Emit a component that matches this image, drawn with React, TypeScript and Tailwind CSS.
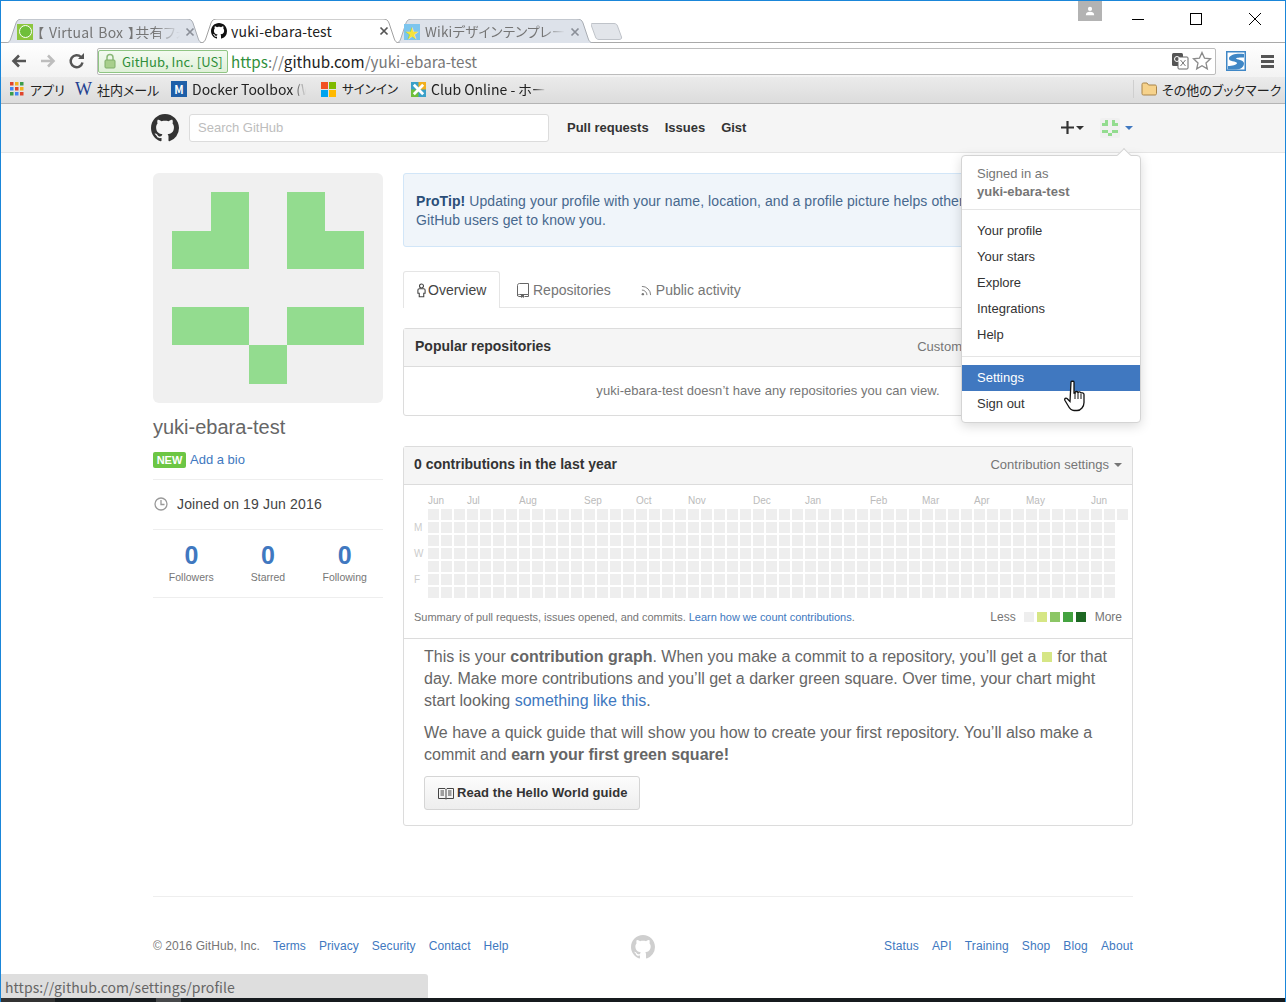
import React from 'react';

const markPath =
  'M8 0C3.58 0 0 3.58 0 8c0 3.54 2.29 6.53 5.47 7.59.4.07.55-.17.55-.38 0-.19-.01-.82-.01-1.49-2.01.37-2.53-.49-2.69-.94-.09-.23-.48-.94-.82-1.13-.28-.15-.68-.52-.01-.53.63-.01 1.08.58 1.23.82.72 1.21 1.87.87 2.33.66.07-.52.28-.87.51-1.07-1.78-.2-3.64-.89-3.64-3.95 0-.87.31-1.59.82-2.15-.08-.2-.36-1.02.08-2.12 0 0 .67-.21 2.2.82.64-.18 1.32-.27 2-.27.68 0 1.36.09 2 .27 1.53-1.04 2.2-.82 2.2-.82.44 1.1.16 1.92.08 2.12.51.56.82 1.27.82 2.15 0 3.07-1.87 3.75-3.65 3.95.29.25.54.73.54 1.48 0 1.07-.01 1.93-.01 2.2 0 .21.15.46.55.38A8.013 8.013 0 0016 8c0-4.42-3.58-8-8-8z';

const Mark = ({ className }: { className: string }) => (
  <svg viewBox="0 0 16 16" className={className} fill="currentColor">
    <path d={markPath} />
  </svg>
);

// 5x5 identicon used for the big avatar and the small one in the header
const identicon = [
  [1, 0],
  [3, 0],
  [0, 1],
  [1, 1],
  [3, 1],
  [4, 1],
  [0, 3],
  [1, 3],
  [3, 3],
  [4, 3],
  [2, 4],
];

const Identicon = ({ className }: { className: string }) => (
  <svg viewBox="-0.5 -0.5 6 6" className={className} shapeRendering="crispEdges">
    <rect x="-0.5" y="-0.5" width="6" height="6" fill="#f0f0f0" />
    {identicon.map(([x, y]) => (
      <rect key={`${x}-${y}`} x={x} y={y} width="1" height="1" fill="#93dc8f" />
    ))}
  </svg>
);

const TabShape = ({ w, fill, stroke }: { w: number; fill: string; stroke: string }) => (
  <svg width={w} height="24" className="absolute left-0 bottom-0">
    <path
      d={`M0 24 C4 24 5 22 6 19 L11 4 C12 1 14 0 17 0 H${w - 17} C${w - 14} 0 ${w - 12} 1 ${w - 11} 4 L${w - 6} 19 C${w - 5} 22 ${w - 4} 24 ${w} 24`}
      fill={fill}
      stroke={stroke}
    />
  </svg>
);

const tabTitle = 'tracking-[0.2px] whitespace-nowrap overflow-hidden';

const TabClose = ({ dark }: { dark?: boolean }) => (
  <svg viewBox="0 0 10 10" className="w-[10px] h-[10px] shrink-0">
    <path d="M1.5 1.5l7 7M8.5 1.5l-7 7" stroke={dark ? '#555' : '#8a8f98'} strokeWidth="1.7" />
  </svg>
);

const months: [string, number][] = [
  ['Jun', 3],
  ['Jul', 4],
  ['Aug', 5],
  ['Sep', 4],
  ['Oct', 4],
  ['Nov', 5],
  ['Dec', 4],
  ['Jan', 5],
  ['Feb', 4],
  ['Mar', 4],
  ['Apr', 4],
  ['May', 5],
  ['Jun', 3],
];

const cells = Array.from({ length: 53 * 7 + 1 });

const footerLeft = ['Terms', 'Privacy', 'Security', 'Contact', 'Help'];
const footerRight = ['Status', 'API', 'Training', 'Shop', 'Blog', 'About'];

const BrowserChrome = () => (
  <div className="shrink-0 [font-family:'Noto_Sans_CJK_JP','Noto_Sans',sans-serif] [font-feature-settings:'palt'] leading-none">
    {/* title bar + tabs */}
    <div className="relative h-[42px] bg-white border-b border-[#a9a9a9] flex items-end pl-[4px]">
      <div className="relative w-[199px] h-[23px] -mb-px flex items-center pl-[12px] pr-[9px] text-[#757575]">
        <TabShape w={199} fill="#dde2ea" stroke="#a9adb3" />
        <span className="relative w-[16px] h-[16px] shrink-0 bg-[#8cc63f] flex items-center justify-center">
          <span className="w-[13px] h-[13px] rounded-full bg-[#6fbf3a] border border-white" />
        </span>
        <span className={`relative flex-1 ml-[4px] text-[14px] [word-spacing:1.5px] ${tabTitle} [mask-image:linear-gradient(to_right,black_82%,transparent)]`}>【 Virtual Box 】共有フォルダ</span>
        <span className="relative ml-[5px]"><TabClose /></span>
      </div>
      <div className="relative w-[200px] h-[24px] -ml-[4px] -mb-px flex items-center pl-[11px] pr-[11px] text-[#222] z-10">
        <TabShape w={200} fill="#ffffff" stroke="#a0a0a0" />
        <Mark className="relative w-[16px] h-[16px] mr-[4px] text-[#111] shrink-0" />
        <span className={`relative flex-1 text-[14px] ${tabTitle}`}>yuki-ebara-test</span>
        <span className="relative"><TabClose dark /></span>
      </div>
      <div className="relative w-[199px] h-[23px] -ml-[5px] -mb-px flex items-center pl-[9px] pr-[14px] text-[#757575]">
        <TabShape w={199} fill="#dde2ea" stroke="#a9adb3" />
        <span className="relative w-[16px] h-[16px] mr-[5px] shrink-0 bg-[#7cc5ee] flex items-center justify-center text-[14px] text-[#f6e33c]">★</span>
        <span className={`relative flex-1 text-[13.500px] ${tabTitle} [mask-image:linear-gradient(to_right,black_85%,transparent)]`}>Wikiデザインテンプレート</span>
        <span className="relative ml-[5px]"><TabClose /></span>
      </div>
      <svg width="32" height="17" className="-ml-[3px] mb-[2px]">
        <path d="M1 .5H23C25 .5 26 1.500 26.500 3L30.500 14C31 15.500 30 16.500 28 16.500H8C6 16.500 5 15.500 4.500 14L.5 3C0 1.500 0 .5 1 .5z" fill="#e2e5ea" stroke="#bfc3c9" />
      </svg>

      {/* window controls */}
      <div className="absolute top-0 left-[1077px] w-[24px] h-[20px] bg-[#b3b3b3] flex items-center justify-center">
        <svg viewBox="0 0 12 12" className="w-[10px] h-[10px]" fill="#fff">
          <circle cx="6" cy="3.500" r="2.500" />
          <path d="M1 11c0-3 2-4 5-4s5 1 5 4z" />
        </svg>
      </div>
      <div className="absolute top-[12px] right-[24px] flex items-center gap-[46px]">
        <span className="w-[12px] h-px bg-black" />
        <span className="w-[12px] h-[12px] border border-black" />
        <svg viewBox="0 0 12 12" className="w-[12px] h-[12px] ml-px">
          <path d="M0 0l12 12M12 0L0 12" stroke="#000" strokeWidth="1" />
        </svg>
      </div>
    </div>

    {/* toolbar */}
    <div className="h-[34px] pt-[2px] flex items-center bg-gradient-to-b from-white to-[#f3f3f3]">
      <div className="w-[96px] shrink-0 flex items-center pl-[9px] gap-[11px] text-[#5a5a5a]">
        <svg viewBox="0 0 18 18" className="w-[18px] h-[18px]">
          <path d="M16 9H4M9 3.500L3.500 9 9 14.500" fill="none" stroke="#555" strokeWidth="2.600" />
        </svg>
        <svg viewBox="0 0 18 18" className="w-[18px] h-[18px]">
          <path d="M2 9h12M9 3.500L14.500 9 9 14.500" fill="none" stroke="#bdbdbd" strokeWidth="2.600" />
        </svg>
        <svg viewBox="0 0 18 18" className="w-[18px] h-[18px]">
          <path d="M14.500 10.500A6 6 0 1 1 13 5" fill="none" stroke="#555" strokeWidth="2.500" />
          <path d="M10 7h6V1z" fill="#555" />
        </svg>
      </div>
      <div className="w-[1119px] shrink-0 h-[27px] bg-white border border-[#bcbcbc] rounded-[2px] flex items-center pr-[3px]">
        <div className="h-[23px] w-[130px] shrink-0 border border-[#8fc583] rounded-[2px] bg-gradient-to-b from-[#f3faf0] to-[#dff0d8] flex items-center pl-[5px] text-[#2f8f3a] text-[13px] tracking-[0.05px]">
          <svg viewBox="0 0 12 16" className="w-[12px] h-[16px] mr-[6px] shrink-0">
            <path d="M3 7V4.500a3 3 0 0 1 6 0V7" fill="none" stroke="#8ab878" strokeWidth="1.500" />
            <rect x="1" y="7" width="10" height="8" rx="1" fill="#a8cf8c" stroke="#7fae68" />
          </svg>
          GitHub, Inc. [US]
        </div>
        <div className="ml-[3px] flex-1 text-[15.200px] whitespace-nowrap pt-px">
          <span className="text-[#2f8f3a]">https</span>
          <span className="text-[#777]">://</span>
          <span className="text-[#222]">github.com</span>
          <span className="text-[#777]">/yuki-ebara-test</span>
        </div>
        <svg viewBox="0 0 18 18" className="w-[18px] h-[18px] mr-[3px]">
          <rect x="1" y="1" width="11" height="13" rx="1.500" fill="#555" />
          <rect x="7" y="5" width="10" height="12" rx="1" fill="#fff" stroke="#666" />
          <path d="M9.500 8l5 6M14.500 8l-5 6" stroke="#777" />
          <circle cx="6" cy="7" r="2.500" fill="none" stroke="#fff" />
        </svg>
        <svg viewBox="0 0 20 20" className="w-[20px] h-[20px]">
          <path d="M10 1.500l2.500 5.600 6 .7-4.500 4.100 1.300 6L10 14.800l-5.300 3.100 1.300-6L1.500 7.800l6-.7z" fill="#fff" stroke="#8b8b8b" strokeWidth="1.300" />
        </svg>
      </div>
      <div className="flex items-center pl-[10px] gap-[15px]">
        <svg viewBox="0 0 20 20" className="w-[20px] h-[20px]">
          <rect width="20" height="20" fill="#3f87c6" />
          <rect x="1.500" y="1.500" width="17" height="17" fill="#fff" />
          <path d="M18 3C12 2 4 3 3 7c-1 4 8 3 8 5 0 2-5 3-9 3v3.500h8c5 0 8-3 8-6 0-4-8-4-8-5 0-1 4-1 8-1z" fill="#3f87c6" />
        </svg>
        <div className="w-[13px] flex flex-col gap-[2px]">
          <span className="h-[3px] bg-[#555]" />
          <span className="h-[3px] bg-[#555]" />
          <span className="h-[3px] bg-[#555]" />
        </div>
      </div>
    </div>

    {/* bookmarks bar */}
    <div className="h-[27px] flex items-center bg-gradient-to-b from-[#ebebeb] to-[#dcdcdc] border-b border-[#b4b4b4] text-[14px] text-[#222] pl-[9px] pr-[9px] pb-[2px] whitespace-nowrap *:shrink-0">
      <svg viewBox="0 0 14 14" className="w-[14px] h-[14px] mr-[6px]">
        {[0, 5, 10].flatMap((y, r) =>
          [0, 5, 10].map((x, c) => (
            <rect key={`${x}-${y}`} x={x} y={y} width="3.500" height="3.500" fill={['#e0452c', '#f2b01e', '#3b9c4a', '#4285f4', '#e0452c', '#f2b01e', '#3b9c4a', '#4285f4', '#e0452c'][r * 3 + c]} />
          )),
        )}
      </svg>
      <span className="w-[45px] text-[13px]">アプリ</span>
      <span className="w-[22px] text-[#23408f] text-[18px] [font-family:'Liberation_Serif',serif]">W</span>
      <span className="w-[74px] text-[13px]">社内メール</span>
      <span className="w-[16px] h-[16px] mr-[5px] bg-[#1e5fa8] text-white text-[11px] font-bold flex items-center justify-center">M</span>
      <span className="w-[114px] overflow-hidden [mask-image:linear-gradient(to_right,black_88%,transparent)]">Docker Toolbox (Windows)</span>
      <span className="ml-[15px] mr-[6px] w-[15px] h-[15px] grid grid-cols-2 gap-px">
        <span className="bg-[#f25022]" />
        <span className="bg-[#7fba00]" />
        <span className="bg-[#00a4ef]" />
        <span className="bg-[#ffb900]" />
      </span>
      <span className="w-[69px] text-[12.500px]">サインイン</span>
      <svg viewBox="0 0 16 16" className="w-[15px] h-[15px] mr-[5px]">
        <rect width="16" height="16" fill="#3aa0c8" />
        <rect x="8" width="8" height="8" fill="#f2b01e" />
        <rect y="8" width="8" height="8" fill="#6fbf3a" />
        <path d="M3 3l10 10M13 3L3 13" stroke="#fff" strokeWidth="3" />
      </svg>
      <span className="w-[115px] overflow-hidden [mask-image:linear-gradient(to_right,black_88%,transparent)]">Club Online - ホームページ</span>
      <span className="ml-auto h-[18px] w-px bg-[#cfcfcf]" />
      <svg viewBox="0 0 16 14" className="w-[16px] h-[14px] ml-[7px] mr-[5px]">
        <path d="M1 2.500C1 1.500 1.500 1 2.500 1H6l1.500 2H14c.8 0 1.500.500 1.500 1.500v7c0 1-.7 1.500-1.500 1.500H2.500C1.500 13 1 12.500 1 11.500z" fill="#f6d28b" stroke="#a8844a" />
      </svg>
      <span className="w-[114px] text-[13px]">その他のブックマーク</span>
    </div>
  </div>
);

const GithubHeader = () => (
  <div className="shrink-0 h-[49px] bg-[#f5f5f5] border-b border-[#e5e5e5]">
    <div className="w-[980px] mx-auto h-full flex items-center pb-px">
      <Mark className="-ml-[2px] w-[28px] h-[28px] text-[#333] shrink-0" />
      <div className="ml-[10px] w-[360px] h-[28px] bg-white border border-[#dcdcdc] rounded-[3px] pl-[8px] flex items-center text-[13px] text-[#bdbdbd]">
        Search GitHub
      </div>
      <nav className="ml-[18px] flex gap-[16px] text-[13px] font-bold text-[#333]">
        <span>Pull requests</span>
        <span>Issues</span>
        <span>Gist</span>
      </nav>
      <div className="ml-auto flex items-center">
        <svg viewBox="0 0 12 12" className="w-[13px] h-[13px]">
          <path d="M5 0h2v5h5v2H7v5H5V7H0V5h5z" fill="#333" />
        </svg>
        <span className="ml-[2px] border-x-[4px] border-t-[4px] border-x-transparent border-t-[#333]" />
        <Identicon className="ml-[16px] w-[20px] h-[20px] rounded-[2px]" />
        <span className="ml-[5px] border-x-[4px] border-t-[4px] border-x-transparent border-t-[#4078c0]" />
      </div>
    </div>
  </div>
);

const UserMenu = () => (
  <div className="absolute left-[960px] top-[154px] w-[180px] h-[268px] bg-white border border-[#d4d4d4] rounded-[4px] shadow-[0_3px_12px_rgba(0,0,0,0.15)] text-[13px] text-[#333] z-20">
    <span className="absolute -top-[6px] right-[11px] w-[10px] h-[10px] rotate-45 bg-white border-l border-t border-[#d4d4d4]" />
    <div className="h-[54px] pt-[9px] px-[15px] text-[#767676] leading-[18px] border-b border-[#e5e5e5]">
      <div>Signed in as</div>
      <div className="font-bold">yuki-ebara-test</div>
    </div>
    <div className="py-[8px] border-b border-[#e5e5e5]">
      {['Your profile', 'Your stars', 'Explore', 'Integrations', 'Help'].map((item) => (
        <div key={item} className="h-[26px] px-[15px] flex items-center">{item}</div>
      ))}
    </div>
    <div className="pt-[8px]">
      <div className="h-[26px] px-[15px] flex items-center bg-[#4078c0] text-white">Settings</div>
      <div className="h-[26px] px-[15px] flex items-center">Sign out</div>
    </div>
  </div>
);

const Sidebar = () => (
  <aside className="w-[230px] shrink-0">
    <Identicon className="w-[230px] h-[230px] rounded-[6px]" />
    <h1 className="mt-[12px] text-[20px] leading-[24px] text-[#666]">yuki-ebara-test</h1>
    <div className="mt-[13px] flex items-center h-[16px]">
      <span className="w-[33px] h-[16px] rounded-[2px] bg-[#6cc644] text-white text-[11px] font-bold flex items-center justify-center">NEW</span>
      <span className="ml-[4px] text-[13px] text-[#4078c0]">Add a bio</span>
    </div>
    <div className="mt-[11px] h-[51px] border-y border-[#eee] flex items-center text-[14px] tracking-[0.15px] text-[#444]">
      <svg viewBox="0 0 14 14" className="w-[14px] h-[14px] ml-px mr-[9px] mb-[2px]">
        <circle cx="7" cy="7" r="6" fill="none" stroke="#999" strokeWidth="1.300" />
        <path d="M7 3v4.500h3.500" fill="none" stroke="#999" strokeWidth="1.300" />
      </svg>
      Joined on 19 Jun 2016
    </div>
    <div className="h-[68px] border-b border-[#eee] grid grid-cols-3 text-center pt-[10px]">
      {['Followers', 'Starred', 'Following'].map((label) => (
        <div key={label}>
          <div className="text-[25px] leading-[30px] font-bold text-[#4078c0]">0</div>
          <div className="text-[10.500px] leading-[14px] text-[#767676]">{label}</div>
        </div>
      ))}
    </div>
  </aside>
);

const Tabs = () => (
  <div className="mt-[24px] h-[37px] flex border-b border-[#e5e5e5] text-[14px] text-[#767676]">
    <div className="w-[97px] h-[37px] bg-white border border-b-0 border-[#e5e5e5] rounded-t-[3px] flex items-center pl-[13px] text-[#444]">
      <svg viewBox="0 0 10 16" className="w-[9px] h-[15px] mr-[2px]">
        <circle cx="5" cy="3" r="2.200" fill="none" stroke="#444" strokeWidth="1.200" />
        <path d="M1 11V7.500C1 6.500 1.500 6 2.500 6h5C8.500 6 9 6.500 9 7.500V11H7.500v4h-5v-4z" fill="none" stroke="#444" strokeWidth="1.200" />
      </svg>
      Overview
    </div>
    <div className="ml-[17px] flex items-center pt-[2px]">
      <svg viewBox="0 0 12 15" className="w-[12px] h-[15px] mr-[4px]">
        <path d="M2.500 .5H11.500V11.500H2.500C1.300 11.500 .5 12 .5 13V2.500C.5 1.300 1.300 .5 2.500 .5z" fill="none" stroke="#666" />
        <path d="M.5 12.500c0 .7.7 1 1.500 1h2M11.500 11.500v2H7.500" fill="none" stroke="#666" />
        <path d="M4 12h3v3l-1.500-1L4 15z" fill="#666" />
      </svg>
      Repositories
    </div>
    <div className="ml-[29px] flex items-center pt-[2px]">
      <svg viewBox="0 0 12 12" className="w-[11px] h-[11px] mr-[4px] ml-px">
        <circle cx="2" cy="10" r="1.300" fill="#777" />
        <path d="M1 5.500A5.500 5.500 0 0 1 6.500 11M1 1.500A9.500 9.500 0 0 1 10.500 11" fill="none" stroke="#777" />
      </svg>
      Public activity
    </div>
  </div>
);

const ContributionBox = () => (
  <section className="mt-[30px] border border-[#dcdcdc] rounded-[3px] h-[380px]">
    <div className="h-[38px] bg-[#f5f5f5] border-b border-[#dcdcdc] flex items-center justify-between pl-[10px] pr-[10px] pb-[2px]">
      <h2 className="text-[14px] font-bold text-[#333]">0 contributions in the last year</h2>
      <span className="flex items-center text-[13px] text-[#767676]">
        Contribution settings
        <span className="ml-[5px] border-x-[4px] border-t-[4px] border-x-transparent border-t-[#767676]" />
      </span>
    </div>
    <div className="h-[154px] border-b border-[#dcdcdc] pl-[10px] pr-[10px] pt-[9px] relative">
      <div className="pl-[14px] h-[14px] flex text-[10px] leading-[14px] text-[#bbb]">
        {months.map(([name, weeks], i) => (
          <span key={i} className="shrink-0" style={{ width: weeks * 13 }}>{name}</span>
        ))}
      </div>
      <div className="mt-[1px] flex">
        <div className="w-[14px] shrink-0 text-[10px] text-[#ccc] grid grid-rows-7 auto-rows-[11px] gap-y-[2px] leading-[11px]">
          <span />
          <span>M</span>
          <span />
          <span>W</span>
          <span />
          <span>F</span>
          <span />
        </div>
        <div className="grid grid-flow-col grid-rows-7 auto-cols-[11px] auto-rows-[11px] gap-[2px]">
          {cells.map((_, i) => (
            <span key={i} className="h-[11px] bg-[#eeeeee]" />
          ))}
        </div>
      </div>
      <div className="mt-[10px] flex items-center justify-between">
        <p className="text-[11px] tracking-[-0.03px] text-[#767676]">
          Summary of pull requests, issues opened, and commits. <span className="text-[#4078c0]">Learn how we count contributions</span>.
        </p>
        <div className="flex items-center text-[12px] text-[#767676]">
          <span className="mr-[8px]">Less</span>
          <span className="flex gap-[3px]">
            <span className="w-[10px] h-[10px] bg-[#eeeeee]" />
            <span className="w-[10px] h-[10px] bg-[#d6e685]" />
            <span className="w-[10px] h-[10px] bg-[#8cc665]" />
            <span className="w-[10px] h-[10px] bg-[#44a340]" />
            <span className="w-[10px] h-[10px] bg-[#1e6823]" />
          </span>
          <span className="ml-[9px]">More</span>
        </div>
      </div>
    </div>
    <div className="pl-[20px] pr-[20px] pt-[7px] text-[16px] leading-[22px] text-[#666]">
      <p>
        This is your <b>contribution graph</b>. When you make a commit to a repository, you’ll get a{' '}
        <span className="inline-block w-[10px] h-[10px] bg-[#d6e685] mx-[1px]" /> for that day. Make more contributions and you’ll get a darker green square. Over time, your chart might start looking <span className="text-[#4078c0]">something like this</span>.
      </p>
      <p className="mt-[10px]">
        We have a quick guide that will show you how to create your first repository. You’ll also make a commit and <b>earn your first green square!</b>
      </p>
      <button className="mt-[10px] h-[34px] w-[216px] bg-gradient-to-b from-[#fcfcfc] to-[#eeeeee] border border-[#d5d5d5] rounded-[3px] flex items-center pl-[13px] text-[13px] tracking-[0.07px] font-bold text-[#333]">
        <svg viewBox="0 0 16 13" className="w-[16px] h-[13px] mr-[3px]">
          <path d="M.5 1.500h6.500l1 1 1-1h6.500v10H9l-1 .5-1-.5H.5zM8 2.500V12" fill="none" stroke="#444" />
          <path d="M2.500 4H6M2.500 6H6M2.500 8H6M10 4h3.500M10 6h3.500M10 8h3.500" stroke="#444" />
        </svg>
        Read the Hello World guide
      </button>
    </div>
  </section>
);

const App = () => (
  <div className="relative w-[1286px] h-[1002px] overflow-hidden bg-white border-x border-t border-[#1a86d9] flex flex-col [font-family:'Liberation_Sans',Arial,sans-serif]">
    <BrowserChrome />
    <GithubHeader />

    <main className="w-[980px] mx-auto pt-[20px] flex gap-[20px] shrink-0">
      <Sidebar />
      <div className="w-[730px] shrink-0">
        <div className="h-[74px] bg-[#f0f5fa] border border-[#d2e6f8] rounded-[3px] pl-[12px] pt-[18px] text-[14px] tracking-[0.08px] leading-[19px] text-[#47688e] whitespace-nowrap overflow-hidden">
          <b className="text-[#2a4e78]">ProTip!</b> Updating your profile with your name, location, and a profile picture helps other
          <br />
          GitHub users get to know you.
        </div>
        <Tabs />
        <section className="mt-[20px] h-[88px] border border-[#dcdcdc] rounded-[3px]">
          <div className="h-[38px] bg-[#f5f5f5] border-b border-[#dcdcdc] flex items-center justify-between px-[11px] pb-[2px]">
            <h2 className="text-[14px] font-bold text-[#333]">Popular repositories</h2>
            <span className="text-[13px] text-[#767676]">Customize your pinned repositories</span>
          </div>
          <p className="h-[48px] flex items-center justify-center text-[13px] tracking-[0.05px] text-[#767676]">yuki-ebara-test doesn’t have any repositories you can view.</p>
        </section>
        <ContributionBox />
      </div>
    </main>

    <footer className="w-[980px] mx-auto mt-[70px] h-[50px] border-t border-[#eeeeee] pt-[49px] flex items-center justify-between text-[12px] shrink-0 relative">
      <div className="flex gap-[13px] tracking-[0.07px] text-[#4078c0]">
        <span className="text-[#767676]">© 2016 GitHub, Inc.</span>
        {footerLeft.map((item) => (
          <span key={item}>{item}</span>
        ))}
      </div>
      <Mark className="absolute left-[478px] top-[38px] w-[24px] h-[24px] text-[#cfcfcf]" />
      <div className="flex gap-[13px] tracking-[0.14px] text-[#4078c0]">
        {footerRight.map((item) => (
          <span key={item}>{item}</span>
        ))}
      </div>
    </footer>

    <UserMenu />

    {/* hand cursor over Settings */}
    <svg viewBox="0 0 22 32" className="absolute left-[1063px] top-[379px] w-[22px] h-[32px] z-30">
      <path
        d="M7 2c0-1 3-1 3 0v11l1 0c0-2 3-2 3 0 0-1.500 3-1.500 3 .5 0-1 3-1 3 1v8c0 4-3 8-7 8h-3c-3 0-5-3-6-5l-3-5c-1-2 1-3 2-2l3 3z"
        fill="#fff"
        stroke="#111"
        strokeWidth="1.300"
      />
      <path d="M11 13v6M14 13v6M17 14v5" stroke="#111" />
    </svg>

    {/* status bubble + taskbar sliver */}
    <div className="absolute left-0 bottom-[4px] w-[427px] h-[24px] bg-[#dedede] rounded-tr-[3px] pl-[4px] pt-[3px] flex items-center text-[14px] tracking-[0.05px] text-[#666] [font-family:'Noto_Sans_CJK_JP','Noto_Sans',sans-serif] z-30">
      https://github.com/settings/profile
    </div>
    <div className="absolute left-0 right-0 bottom-0 h-[4px] bg-[#161b1e] flex z-30">
      <span className="w-[54px] bg-[#333333]" />
      <span className="ml-[101px] w-[25px] bg-[#47494b]" />
    </div>
  </div>
);

export default App;
